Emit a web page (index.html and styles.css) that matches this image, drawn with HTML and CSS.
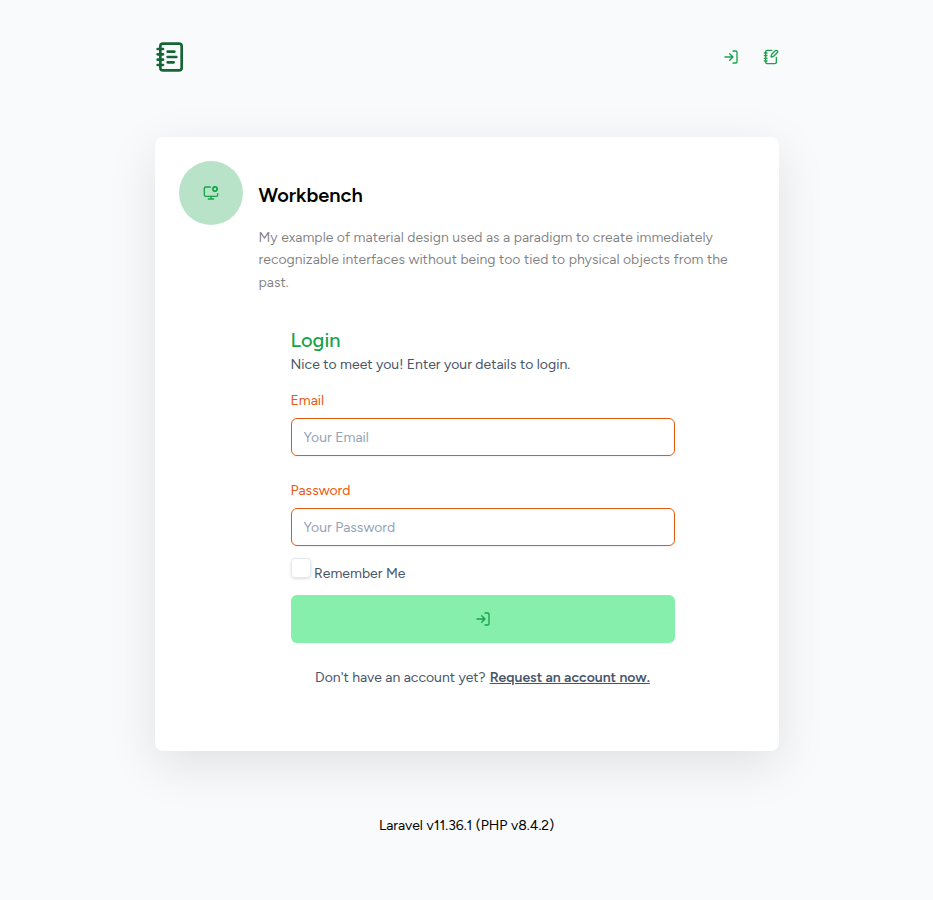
FILE: index.html
```html
<!DOCTYPE html>
<html lang="en">
<head>
<meta charset="utf-8">
<title>Workbench</title>
<link rel="stylesheet" href="styles.css">
</head>
<body>
<div class="page">
  <header class="header">
    <a class="brand" href="#"><svg class="icon icon-brand" viewBox="0 0 24 24"><path d="M2 6h4M2 10h4M2 14h4M2 18h4"/><rect width="16" height="20" x="4" y="2" rx="2"/><path d="M9.5 8h5M9.5 12H16M9.5 16H14"/></svg></a>
    <nav class="nav">
      <a href="#"><svg class="icon" viewBox="0 0 24 24"><path d="M15 3h4a2 2 0 0 1 2 2v14a2 2 0 0 1-2 2h-4"/><path d="m10 17 5-5-5-5M15 12H3"/></svg></a>
      <a href="#"><svg class="icon" viewBox="0 0 24 24"><path d="M13.4 2H6a2 2 0 0 0-2 2v16a2 2 0 0 0 2 2h12a2 2 0 0 0 2-2v-7.4"/><path d="M2 6h4M2 10h4M2 14h4M2 18h4"/><path d="M21.378 5.626a1 1 0 1 0-3.004-3.004l-5.01 5.012a2 2 0 0 0-.506.854l-.837 2.87a.5.5 0 0 0 .62.62l2.87-.837a2 2 0 0 0 .854-.506z"/></svg></a>
    </nav>
  </header>
  <main class="card">
    <div class="badge"><svg class="icon" viewBox="0 0 24 24"><path d="M12 17v4M8 21h8"/><path d="m15.2 4.9-.9-.4"/><path d="m15.2 7.1-.9.4"/><path d="m16.9 3.2-.4-.9"/><path d="m16.9 8.8-.4.9"/><path d="m19.5 2.3-.4.9"/><path d="m19.5 9.7-.4-.9"/><path d="m21.7 4.5-.9.4"/><path d="m21.7 7.5-.9-.4"/><path d="M22 13v2a2 2 0 0 1-2 2H4a2 2 0 0 1-2-2V5a2 2 0 0 1 2-2h7"/><circle cx="18" cy="6" r="3"/></svg></div>
    <div class="content">
      <h2 class="title">Workbench</h2>
      <p class="intro">My example of material design used as a paradigm to create immediately recognizable interfaces without being too tied to physical objects from the past.</p>
      <form class="form">
        <h4 class="form-title">Login</h4>
        <p class="lead">Nice to meet you! Enter your details to login.</p>
        <label class="label" for="email">Email</label>
        <input class="input" id="email" type="email" placeholder="Your Email">
        <label class="label label-password" for="password">Password</label>
        <input class="input" id="password" type="password" placeholder="Your Password">
        <div class="remember"><input class="check" id="remember" type="checkbox"><label for="remember">Remember Me</label></div>
        <button class="submit" type="button"><svg class="icon" viewBox="0 0 24 24"><path d="M15 3h4a2 2 0 0 1 2 2v14a2 2 0 0 1-2 2h-4"/><path d="m10 17 5-5-5-5M15 12H3"/></svg></button>
        <p class="signup"><span>Don't have an account yet?</span><a class="link" href="#">Request an account now.</a></p>
      </form>
    </div>
  </main>
  <footer class="footer">Laravel v11.36.1 (PHP v8.4.2)</footer>
</div>
</body>
</html>
```
FILE: styles.css
```css
* { box-sizing: border-box; margin: 0; padding: 0; }
body { background: #f8fafc; font: 400 14px/22.75px Figtree, Lato, sans-serif; color: #475569; -webkit-font-smoothing: antialiased; }
.page { width: 624px; height: 900px; margin: 0 auto; }
.header { height: 137px; padding-top: 41px; display: flex; justify-content: space-between; }
.icon { display: block; width: 16px; height: 16px; fill: none; stroke: #16a34a; stroke-width: 2; stroke-linecap: round; stroke-linejoin: round; }
.icon-brand { width: 32px; height: 32px; stroke: #166534; }
.nav { display: flex; gap: 24px; padding-top: 8px; }
.card { height: 614px; padding: 24px; display: flex; align-items: flex-start; gap: 16px; background: #fff; border-radius: 8px; box-shadow: 0 14px 50px rgba(0, 0, 0, .1); }
.badge { flex: none; width: 64px; height: 64px; border-radius: 50%; background: #b9e3c9; display: flex; align-items: center; justify-content: center; }
.content { flex: 1; padding-top: 20px; }
.title { font-size: 20px; line-height: 28px; font-weight: 600; color: #000; }
.intro { width: 480px; margin-top: 17.75px; line-height: 22.5px; color: rgba(0, 0, 0, .5); }
.form { width: 384px; margin: 31.75px 0 0 32px; }
.form-title { font-size: 20px; line-height: 28px; font-weight: 500; color: #16a34a; }
.lead { line-height: 20px; padding-top: 1px; }
.label { display: block; line-height: 20px; margin: 16px 0 7px; color: #ea580c; }
.label-password { margin-top: 25px; }
.input { display: block; width: 100%; height: 38px; padding: 0 12px; border: 1px solid #ea580c; border-radius: 6px; font: inherit; background: transparent; box-shadow: 0 1px 2px rgba(0, 0, 0, .05); }
.input::placeholder { color: #94a3b8; opacity: 1; }
.remember { display: flex; gap: 3.5px; margin-top: 12px; height: 37px; }
.remember label { line-height: 20px; padding-top: 6px; }
.check { appearance: none; width: 20px; height: 20px; border: 1px solid #e2e8f0; border-radius: 4px; box-shadow: 0 1px 3px rgba(0, 0, 0, .13); }
.submit { display: flex; align-items: center; justify-content: center; width: 100%; height: 48px; border: 0; border-radius: 6px; background: #86efac; }
.signup { display: flex; justify-content: center; gap: 4px; margin-top: 25px; line-height: 20px; white-space: nowrap; }
.link { font-weight: 600; color: inherit; text-decoration: underline; }
.footer { text-align: center; padding-top: 65px; line-height: 20px; color: #000; }
```
